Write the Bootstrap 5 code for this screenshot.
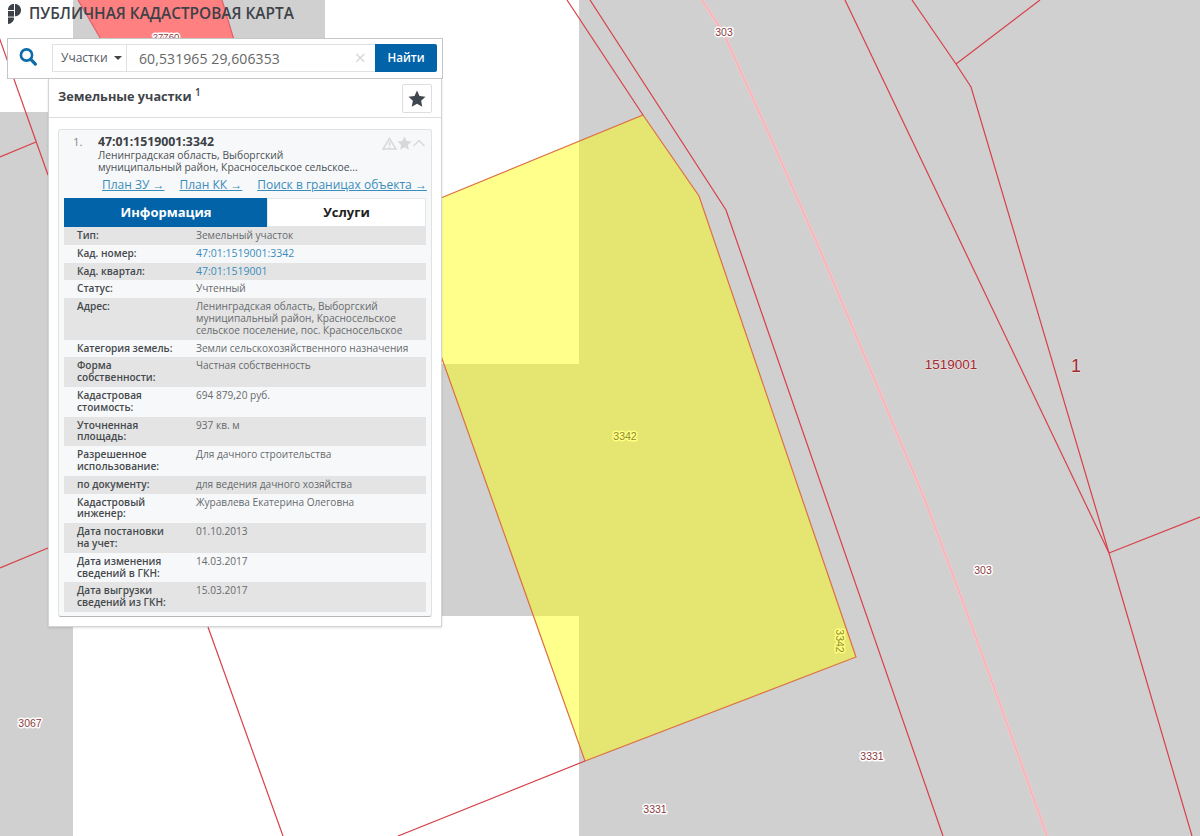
<!DOCTYPE html>
<html lang="ru">
<head>
  <meta charset="UTF-8">
  <meta name="viewport" content="width=device-width, initial-scale=1">
  <title>Публичная кадастровая карта</title>

  <link rel="stylesheet" href="https://cdn.jsdelivr.net/npm/bootstrap@5.3.0/dist/css/bootstrap.min.css">

  <style>
    body {
      font-family: "Open Sans", "Noto Sans", sans-serif;
      background-color: #fff;
      margin: 0;
      overflow: hidden;
    }
    .map-shell {
      position: relative;
      width: 1200px;
      height: 836px;
      overflow: hidden;
    }
    .map-canvas {
      position: absolute;
      inset: 0;
    }
    .map-canvas text {
      font-family: "Liberation Sans", sans-serif;
      font-size: 10.5px;
      fill: #8c3a40;
      stroke: #fff;
      stroke-width: 3px;
      stroke-linejoin: round;
      paint-order: stroke;
    }
    .map-canvas text.big-label {
      fill: #a02c34;
      stroke: #e8dcdc;
      stroke-width: 1.5px;
    }
    .map-canvas text.yellow-label {
      fill: #8c8a30;
      stroke: #ffff80;
    }

    /* brand */
    .brand {
      position: absolute;
      left: 8px;
      top: 4px;
      color: #3c4248;
      font-size: 15.4px;
      font-weight: 600;
      line-height: 20px;
    }

    /* search + results */
    .side-box {
      position: absolute;
      left: 7px;
      top: 38px;
      width: 436px;
    }
    .search-bar {
      height: 41px;
      background: #fff;
      border: 1px solid #c4c7ca;
      padding: 5px 5px 5px 44px;
      position: relative;
    }
    .search-ico {
      position: absolute;
      left: 10px;
      top: 8px;
    }
    .search-bar .input-group {
      height: 28px;
    }
    .kind-btn {
      width: 75px;
      font-size: 12px;
      padding: 0 0 0 8px;
      color: #555a5f;
      background: #fff;
      border: 1px solid #dfe2e5;
      border-radius: 0;
      text-align: left;
      display: flex;
      align-items: center;
    }
    .kind-btn:after {
      margin-left: 6px;
      color: #444;
      border-top-width: 4.5px;
      border-left-width: 4.5px;
      border-right-width: 4.5px;
    }
    .coord-input {
      font-size: 14px;
      color: #666;
      border: 1px solid #dfe2e5;
      border-left: 0;
      border-right: 0;
      border-radius: 0;
      padding: 0 0 0 13px;
      letter-spacing: .1px;
      height: 28px;
    }
    .clear-x {
      position: absolute;
      right: 71px;
      top: 5px;
      color: #d6d8da;
      font-size: 20px;
      line-height: 18px;
      z-index: 6;
    }
    .find-btn {
      width: 62px;
      background: #0263a8;
      border: 0;
      border-radius: 0 2px 2px 0;
      color: #fff;
      font-size: 11.6px;
      font-weight: 600;
      padding: 0;
    }
    .result-panel {
      margin-left: 41px;
      width: 394px;
      height: 548px;
      background: #fff;
      border: 1px solid #d2d4d6;
      border-top: 0;
      box-shadow: 0 1px 2px rgba(0, 0, 0, .12);
    }
    .result-head {
      height: 39px;
      padding: 5px 9px 0 9px;
      border-bottom: 1px solid #dcdee0;
      color: #3f4449;
    }
    .result-head h2 {
      font-size: 12.7px;
      font-weight: 700;
      margin: 0;
      padding-top: 2px;
      line-height: 20px;
    }
    .result-head sup {
      font-size: 10px;
      font-weight: 600;
    }
    .fav-btn {
      width: 30px;
      height: 29px;
      padding: 0;
      background: #fff;
      border: 1px solid #dcdee0;
      border-radius: 2px;
    }
    .parcel-card {
      margin: 11px 9px 0 9px;
      height: 488px;
      background: #f7f8f9;
      border: 1px solid #e0e2e4;
      border-bottom: 1px solid #b4b6b8;
      border-radius: 3px;
      padding: 5px 5px 0 5px;
    }
    .parcel-top {
      position: relative;
      padding-left: 34px;
      color: #4b5055;
      font-size: 10.3px;
      line-height: 12px;
    }
    .parcel-no {
      position: absolute;
      left: 9px;
      top: 0;
      color: #83878b;
      font-size: 11.5px;
      line-height: 14px;
    }
    .parcel-id {
      font-size: 12.3px;
      font-weight: 700;
      line-height: 14px;
      color: #3c4146;
    }
    .parcel-tools {
      position: absolute;
      right: 0;
      top: 1px;
    }
    .parcel-links {
      font-size: 12px;
      line-height: 16px;
      margin: 4px 0 0 38px;
      gap: 15px;
      white-space: nowrap;
    }
    .parcel-links a {
      color: #3a8dbb;
    }
    .tab-pair {
      margin-top: 5px;
      height: 29px;
    }
    .tab-pair .btn {
      font-size: 13px;
      font-weight: 700;
      padding: 0;
      border-radius: 0;
      border: 0;
    }
    .tab-on {
      width: 204px;
      flex: none !important;
      background: #0263a8;
      color: #fff;
    }
    .tab-on:hover {
      background: #0263a8;
      color: #fff;
    }
    .tab-off {
      background: #fff;
      color: #222;
      border: 1px solid #e4e6e8 !important;
    }
    .info-table {
      --bs-table-bg: transparent;
      --bs-table-color: #666a6e;
      --bs-table-striped-bg: #e4e4e4;
      --bs-table-striped-color: #666a6e;
      margin: 0;
      table-layout: fixed;
      font-size: 10.1px;
      line-height: 11.8px;
    }
    .info-table > tbody > tr > * {
      border: 0;
      padding: 3px 0 3px 13px;
      vertical-align: top;
    }
    .info-table.table-striped > tbody > tr > th {
      width: 119px;
      font-weight: 600;
      color: #45494d;
    }
    .info-table a {
      color: #3a8dbb;
      font-size: 10.5px;
      text-decoration: none;
    }
  </style>
</head>
<body>
  <div class="map-shell">

    <!-- map tiles and parcels -->
    <svg class="map-canvas" width="1200" height="836" viewBox="0 0 1200 836" aria-hidden="true">
      <rect x="579" y="0" width="621" height="836" fill="#d0d0d0"/>
      <rect x="0" y="112" width="73" height="724" fill="#d0d0d0"/>
      <rect x="73" y="0" width="252" height="112" fill="#d0d0d0"/>
      <rect x="73" y="364" width="506" height="252" fill="#d0d0d0"/>
      <polygon points="78,0 222,0 240,60 113,60" fill="#ff8080"/>

      <polygon points="643,115 699,196 856,657 585,761 392,218" fill="#ffff00" fill-opacity=".45" stroke="#dc7040" stroke-width="1.2"/>

      <g fill="none" stroke="#d8404a" stroke-width="1.2">
        <polyline points="567,0 643,115"/>
        <polyline points="590,0 726,210 943,836"/>
        <polyline points="845,0 1109,553"/>
        <polyline points="912,0 956,64 971,87 1109,553 1192,836"/>
        <polyline points="956,64 1040,0"/>
        <polyline points="1109,553 1200,517"/>
        <polyline points="-1,37 48,175"/>
        <polyline points="36,142 0,157"/>
        <polyline points="0,568 48,548"/>
        <polyline points="208,627 283,836"/>
        <polyline points="585,761 398,836"/>
        <polyline points="78,0 113,60" stroke="#e06068"/>
        <polyline points="222,0 240,60" stroke="#e06068"/>
      </g>
      <polyline points="702,0 723,32 773,143 820,250 925,500 967,613 1001,707 1047,836" fill="none" stroke="#f6c4c8" stroke-width="3.4" stroke-linejoin="round"/>
      <polyline points="702,0 723,32 773,143 820,250 925,500 967,613 1001,707 1047,836" fill="none" stroke="#f2a8ae" stroke-width=".8" stroke-linejoin="round"/>

      <text x="724" y="36" text-anchor="middle">303</text>
      <text x="983" y="574" text-anchor="middle">303</text>
      <text x="872" y="760" text-anchor="middle">3331</text>
      <text x="655" y="813" text-anchor="middle">3331</text>
      <text x="30" y="727" text-anchor="middle">3067</text>
      <text x="166" y="40" text-anchor="middle" style="font-size:9.5px">27760</text>
      <text x="951" y="369" text-anchor="middle" class="big-label" style="font-size:13.5px">1519001</text>
      <text x="1076" y="372" text-anchor="middle" class="big-label" style="font-size:18px">1</text>
      <text x="625" y="440" text-anchor="middle" class="yellow-label">3342</text>
      <text transform="translate(836,641) rotate(90)" text-anchor="middle" class="yellow-label">3342</text>
    </svg>

    <!-- brand -->
    <div class="brand d-flex align-items-center gap-2">
      <svg width="13" height="20" viewBox="0 0 13 20" fill="#3c4248" aria-hidden="true">
        <path d="M0 5.500C0 2.500 2.500 0 5.600 0H6v6H0z"/>
        <path d="M7 0c3.400 0 6 2.700 6 6.200 0 3.400-2.600 6-6 6z"/>
        <path d="M0 7h6v5.600H0z"/>
        <path d="M0 13.400h6v.6C6 17.200 3.400 19.700 0 20z"/>
      </svg>
      <span>ПУБЛИЧНАЯ КАДАСТРОВАЯ КАРТА</span>
    </div>

    <!-- search + results -->
    <div class="side-box">
      <div class="search-bar">
        <svg class="search-ico" width="20" height="20" viewBox="0 0 20 20" fill="none" stroke="#0b6bab" aria-hidden="true">
          <circle cx="8.500" cy="8" r="5.600" stroke-width="2.600"/>
          <path d="M12.800 12.300l4.600 4.800" stroke-width="3.200" stroke-linecap="round"/>
        </svg>
        <div class="input-group flex-nowrap">
          <button class="btn dropdown-toggle kind-btn" type="button">Участки</button>
          <input type="text" class="form-control coord-input" value="60,531965 29,606353">
          <span class="clear-x">×</span>
          <button class="btn find-btn" type="button">Найти</button>
        </div>
      </div>

      <div class="result-panel">
        <div class="result-head d-flex justify-content-between align-items-start">
          <h2>Земельные участки <sup>1</sup></h2>
          <button class="btn fav-btn d-flex align-items-center justify-content-center" type="button" aria-label="Избранное">
            <svg width="18" height="17" viewBox="0 0 18 17" fill="#3f464e" aria-hidden="true">
              <path d="M9 0.500l2.500 5.500 6 .7-4.400 4.100 1.200 5.900L9 13.700l-5.300 3 1.200-5.900L.5 6.700l6-.7z"/>
            </svg>
          </button>
        </div>

        <div class="card parcel-card">
          <div class="parcel-top">
            <span class="parcel-no">1.</span>
            <div class="parcel-id">47:01:1519001:3342</div>
            <div>Ленинградская область, Выборгский<br>муниципальный район, Красносельское сельское...</div>
            <div class="parcel-tools d-flex align-items-center">
              <svg width="15" height="13" viewBox="0 0 15 13" fill="none" stroke="#d6d8da" stroke-width="1.500" aria-hidden="true">
                <path d="M7.500 1.500L14 12H1z"/><path d="M7.500 5v4M7.500 10v1"/>
              </svg>
              <svg width="15" height="14" viewBox="0 0 18 17" fill="#d6d8da" aria-hidden="true">
                <path d="M9 0.500l2.500 5.500 6 .7-4.400 4.100 1.200 5.900L9 13.700l-5.300 3 1.200-5.900L.5 6.700l6-.7z"/>
              </svg>
              <svg width="14" height="10" viewBox="0 0 14 10" fill="none" stroke="#d6d8da" stroke-width="1.500" aria-hidden="true">
                <path d="M1.500 8L7 2.500 12.500 8"/>
              </svg>
            </div>
          </div>
          <div class="parcel-links d-flex">
            <a href="#">План ЗУ →</a>
            <a href="#">План КК →</a>
            <a href="#">Поиск в границах объекта →</a>
          </div>

          <div class="btn-group tab-pair d-flex" role="group">
            <button type="button" class="btn tab-on">Информация</button>
            <button type="button" class="btn tab-off">Услуги</button>
          </div>

          <table class="table table-striped info-table">
            <tbody>
              <tr><th>Тип:</th><td>Земельный участок</td></tr>
              <tr><th>Кад. номер:</th><td><a href="#">47:01:1519001:3342</a></td></tr>
              <tr><th>Кад. квартал:</th><td><a href="#">47:01:1519001</a></td></tr>
              <tr><th>Статус:</th><td>Учтенный</td></tr>
              <tr><th>Адрес:</th><td>Ленинградская область, Выборгский<br>муниципальный район, Красносельское<br>сельское поселение, пос. Красносельское</td></tr>
              <tr><th>Категория земель:</th><td>Земли сельскохозяйственного назначения</td></tr>
              <tr><th>Форма<br>собственности:</th><td>Частная собственность</td></tr>
              <tr><th>Кадастровая<br>стоимость:</th><td>694 879,20 руб.</td></tr>
              <tr><th>Уточненная<br>площадь:</th><td>937 кв. м</td></tr>
              <tr><th>Разрешенное<br>использование:</th><td>Для дачного строительства</td></tr>
              <tr><th>по документу:</th><td>для ведения дачного хозяйства</td></tr>
              <tr><th>Кадастровый<br>инженер:</th><td>Журавлева Екатерина Олеговна</td></tr>
              <tr><th>Дата постановки<br>на учет:</th><td>01.10.2013</td></tr>
              <tr><th>Дата изменения<br>сведений в ГКН:</th><td>14.03.2017</td></tr>
              <tr><th>Дата выгрузки<br>сведений из ГКН:</th><td>15.03.2017</td></tr>
            </tbody>
          </table>
        </div>
      </div>
    </div>
  </div>

  <script src="https://cdn.jsdelivr.net/npm/bootstrap@5.3.0/dist/js/bootstrap.bundle.min.js"></script>
</body>
</html>
